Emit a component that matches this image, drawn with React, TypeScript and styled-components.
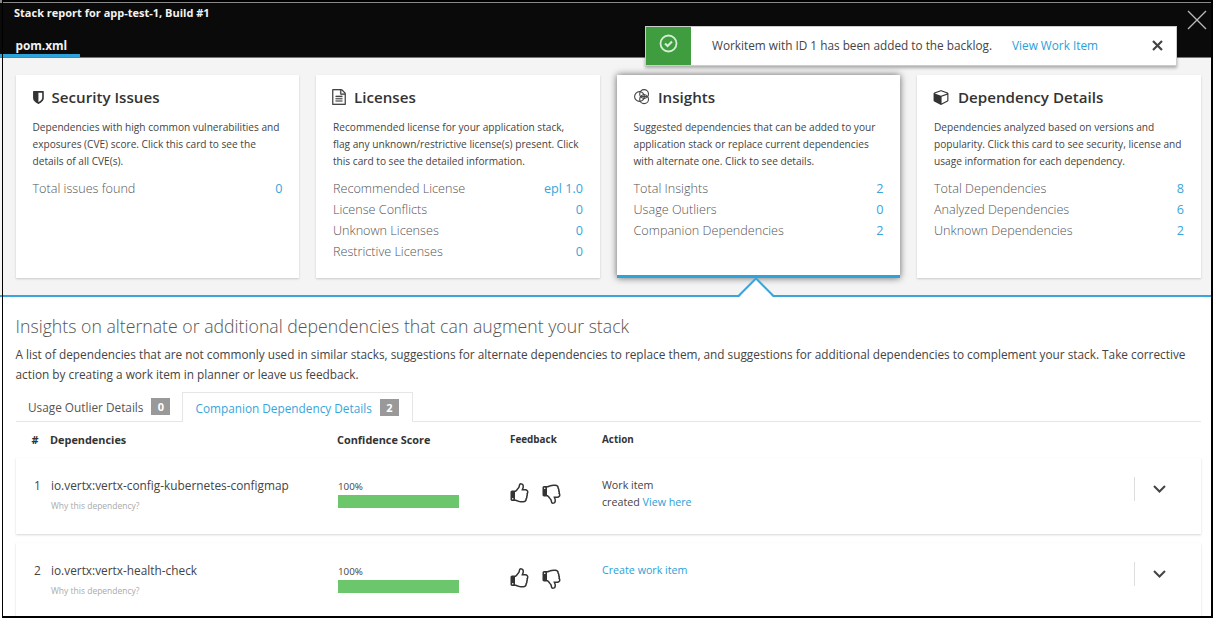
import React from "react";
import styled, { createGlobalStyle } from "styled-components";

const Global = createGlobalStyle`
  * { box-sizing: border-box; }
  body { margin: 0; background: #fff; font-family: "Open Sans", sans-serif; color: #444; }
  h1, h2, p { margin: 0; }
`;

const Frame = styled.div`
  position: relative;
  width: 1213px;
  height: 618px;
  overflow: hidden;
  background: #fff;
  &::after {
    content: "";
    position: absolute;
    inset: 0 0 0 2px;
    border: solid #000;
    border-width: 2px 2px 2px 1px;
    pointer-events: none;
  }
`;

const Header = styled.header`
  height: 58px;
  display: flex;
  justify-content: space-between;
  background: #0a0a0a;
  border-bottom: 1px solid #777;
  box-shadow: inset 0 3px 0 #8a8a8a;
  color: #f2f2f2;
  font-weight: 700;
`;

const HeaderLeft = styled.div`
  display: flex;
  flex-direction: column;
`;

const Title = styled.h1`
  height: 36px;
  padding: 5px 0 0 14px;
  font-size: 11px;
  line-height: 16px;
`;

const FileTab = styled.div`
  width: 80px;
  height: 22px;
  padding: 1px 0 0 15.5px;
  border-bottom: 3px solid #2da3dc;
  font-size: 11.8px;
  line-height: 18px;
`;

const CloseIcon = styled.svg`
  width: 20px;
  height: 20px;
  margin: 10px 6px 0 0;
  flex: none;
`;

const Toast = styled.div`
  position: absolute;
  left: 645px;
  top: 26px;
  width: 532px;
  height: 40px;
  display: flex;
  align-items: center;
  background: #fff;
  border: 1px solid #ccc;
  box-shadow: 0 2px 3px rgba(0, 0, 0, 0.3);
  font-size: 11.8px;
  z-index: 2;
  span, a { padding-bottom: 2px; }
`;

const ToastBadge = styled.div`
  width: 45px;
  height: 38px;
  display: flex;
  justify-content: center;
  padding-top: 7px;
  margin-right: 21px;
  background: #3f9c3f;
`;

const ToastLink = styled.a`
  margin-left: 20px;
  color: #2b9fd8;
`;

const ToastClose = styled.svg`
  width: 11px;
  height: 11px;
  margin: -2px 13px 0 auto;
`;

const Summary = styled.section`
  height: 239px;
  padding: 17px 12px 0 15.5px;
  display: grid;
  grid-template-columns: repeat(4, 283.5px);
  column-gap: 17px;
  background: #f4f4f4;
  border-bottom: 2px solid #39a5dc;
`;

const Card = styled.article<{ $active?: boolean }>`
  position: relative;
  height: 203px;
  padding: 11px 17px 0;
  background: #fff;
  border-bottom: ${(p) => (p.$active ? "3px solid #2da3dc" : "0")};
  box-shadow: ${(p) => (p.$active ? "0 0 7px rgba(0,0,0,.6)" : "0 1px 2px rgba(0,0,0,.18)")};
`;

const CardTitle = styled.h2<{ $gap: number }>`
  display: flex;
  align-items: center;
  gap: ${(p) => p.$gap}px;
  height: 22px;
  font-size: 15.15px;
  font-weight: 600;
  color: #333;
  svg { flex: none; margin-left: -1px; }
`;

const CardText = styled.p`
  margin-top: 11px;
  font-size: 10.15px;
  line-height: 17px;
  white-space: pre;
`;

const Stats = styled.div`
  margin: 8px -0.5px 0 0;
`;

const Stat = styled.div`
  display: flex;
  justify-content: space-between;
  font-size: 12.63px;
  font-weight: 300;
  line-height: 21px;
  color: #555;
`;

const StatValue = styled.span`
  color: #39a5dc;
  font-weight: 400;
`;

const Pointer = styled.svg`
  position: absolute;
  left: 121px;
  top: 202px;
  width: 36px;
  height: 21px;
`;

const Details = styled.main`
  padding: 17px 12px 0 15.5px;
`;

const DetailsTitle = styled.h2`
  font-size: 17.7px;
  line-height: 24px;
  font-weight: 300;
  color: #555;
`;

const Intro = styled.p`
  margin-top: 7px;
  font-size: 11.81px;
  line-height: 19.5px;
  white-space: pre;
`;

const Tabs = styled.div`
  height: 30px;
  margin-top: 8px;
  display: flex;
  border-bottom: 1px solid #e6e6e6;
`;

const Tab = styled.div<{ $active?: boolean }>`
  height: 30px;
  display: flex;
  align-items: center;
  gap: 8px;
  padding: ${(p) => (p.$active ? "0 13.5px 0 12.5px" : "0 11.5px 1px 12.5px")};
  border: ${(p) => (p.$active ? "1px solid #e6e6e6" : "0")};
  border-bottom: 0;
  background: ${(p) => (p.$active ? "#fff" : "transparent")};
  color: ${(p) => (p.$active ? "#39a5dc" : "#555")};
  font-size: 11.8px;
`;

const Count = styled.span`
  width: 19px;
  height: 17px;
  background: #999;
  color: #fff;
  font-size: 11px;
  font-weight: 700;
  line-height: 17px;
  text-align: center;
`;

const columns = "35.5px 287px 172px 92px 1fr";

const TableHead = styled.div`
  height: 36px;
  padding-bottom: 2px;
  display: grid;
  grid-template-columns: ${columns};
  align-items: center;
  font-size: 10.9px;
  font-weight: 700;
  color: #333;
  small { font-size: 9.9px; }
`;

const Row = styled.div`
  height: 76px;
  margin-bottom: 9px;
  display: grid;
  grid-template-columns: ${columns};
  background: #fff;
  box-shadow: 0 1px 2px rgba(0, 0, 0, 0.16);
`;

const HeadCell = styled.span<{ $indent?: number }>`
  padding-left: ${(p) => p.$indent ?? 0}px;
  margin-left: -1px;
`;

const Index = styled.span`
  padding: 18px 0 0 18.5px;
  font-size: 11.9px;
  line-height: 18px;
`;

const Dependency = styled.div`
  padding-top: 18px;
  font-size: 11.85px;
  line-height: 18px;
`;

const Why = styled.div`
  margin-top: 5px;
  color: #aaa;
  font-size: 8.5px;
  line-height: 14px;
`;

const Score = styled.div`
  padding-top: 22px;
  font-size: 9.8px;
  line-height: 14px;
`;

const Bar = styled.div`
  width: 121px;
  height: 13px;
  margin-top: 1px;
  background: #6cc66c;
`;

const Feedback = styled.div`
  display: flex;
  gap: 11px;
  margin-left: -1.5px;
  padding-top: 25px;
`;

const Thumb = styled.svg<{ $down?: boolean }>`
  width: 21px;
  height: 21px;
  fill: #333;
  transform: ${(p) => (p.$down ? "scaleY(-1)" : "none")};
`;

const ActionCell = styled.div`
  display: flex;
  justify-content: space-between;
  padding-top: 18.5px;
  font-size: 10.7px;
  line-height: 17.5px;
`;

const Link = styled.a`
  color: #2b9fd8;
`;

const Expander = styled.div`
  width: 67px;
  height: 24px;
  display: flex;
  align-items: center;
  padding-left: 18px;
  border-left: 1px solid #ddd;
`;

const ShieldIcon = () => (
  <svg width="15" height="15" viewBox="128 0 1536 1792" preserveAspectRatio="xMinYMid meet" fill="#333">
    <path d="M1344 960v-640h-448v1137q119-63 213-137 235-184 235-360zm192-768v768q0 86-33.5 170.5t-83 150-118 127.5-126.5 103-121 77.5-89.5 49.5-42.5 20q-12 6-26 6t-26-6q-16-7-42.5-20t-89.5-49.5-121-77.5-126.5-103-118-127.5-83-150-33.5-170.5v-768q0-26 19-45t45-19h1152q26 0 45 19t19 45z" />
  </svg>
);

const FileIcon = () => (
  <svg width="14" height="16" viewBox="128 0 1536 1792" fill="#444" stroke="#444" strokeWidth="20">
    <path d="M1596 380q28 28 48 76t20 88v1152q0 40-28 68t-68 28h-1344q-40 0-68-28t-28-68v-1600q0-40 28-68t68-28h896q40 0 88 20t76 48zm-444-244v376h376q-10-29-22-41l-313-313q-12-12-41-22zm384 1528v-1024h-416q-40 0-68-28t-28-68v-416h-768v1536h1280zm-1024-864q0-14 9-23t23-9h704q14 0 23 9t9 23v64q0 14-9 23t-23 9h-704q-14 0-23-9t-9-23v-64zm736 224q14 0 23 9t9 23v64q0 14-9 23t-23 9h-704q-14 0-23-9t-9-23v-64q0-14 9-23t23-9h704zm0 256q14 0 23 9t9 23v64q0 14-9 23t-23 9h-704q-14 0-23-9t-9-23v-64q0-14 9-23t23-9h704z" />
  </svg>
);

const InsightsIcon = () => (
  <svg width="17" height="16" viewBox="-0.5 0 17 16" fill="none" stroke="#444" strokeWidth="1.1">
    <circle cx="6" cy="7.5" r="4.9" />
    <circle cx="10.6" cy="5" r="4.4" />
    <circle cx="10.6" cy="10.2" r="4.4" />
    <path d="M6.5 7.6h7.5" />
  </svg>
);

const CubeIcon = () => (
  <svg width="16" height="16" viewBox="0 0 1664 1792" fill="#333">
    <path d="M896 1629l640-349v-636l-640 233v752zm-64-865l698-254-698-254-698 254zm832-252v768q0 35-18 65t-49 47l-704 384q-28 16-61 16t-61-16l-704-384q-31-17-49-47t-18-65v-768q0-40 23-73t61-47l704-256q22-8 44-8t44 8l704 256q38 14 61 47t23 73z" />
  </svg>
);

const thumbPath =
  "M384 1344q0-26-19-45t-45-19-45 19-19 45 19 45 45 19 45-19 19-45zm1152-576q0-51-39-89.5t-89-38.5h-352q0-58 48-159.5t48-160.5q0-98-32-145t-128-47q-26 26-38 85t-30.5 125.5-59.5 109.5q-22 23-77 91-4 5-23 30t-31.5 41-34.5 42.5-40 44-38.5 35.5-40 27-35.5 9h-32v640h32q13 0 31.5 3t33 6.5 38 11 35 11.5 35.5 12.5 29 10.5q211 73 342 73h121q192 0 192-167 0-26-5-56 30-16 47.5-52.5t17.5-73.5-18-69q53-50 53-119 0-25-10-55.5t-25-47.5q32-1 53.5-47t21.5-81zm128-1q0 89-49 163 9 33 9 69 0 77-38 144 3 21 3 43 0 101-60 178 1 139-85 219.5t-227 80.5h-129q-96 0-189.5-22.5t-216.5-65.5q-116-40-138-40h-288q-53 0-90.5-37.5t-37.5-90.5v-640q0-53 37.5-90.5t90.5-37.5h274q36-24 137-155 58-75 107-128 24-25 35.5-85.5t30.5-126.5 62-108q39-37 90-37 84 0 151 32.5t102 101.5 35 186q0 93-48 192h176q104 0 180 76t76 179z";

type CardData = {
  title: string;
  icon: React.ReactNode;
  gap: number;
  text: string;
  stats: [string, string][];
  active?: boolean;
};

const cards: CardData[] = [
  {
    title: "Security Issues",
    icon: <ShieldIcon />,
    gap: 5,
    text: "Dependencies with high common vulnerabilities and\nexposures (CVE) score. Click this card to see the\ndetails of all CVE(s).",
    stats: [["Total issues found", "0"]],
  },
  {
    title: "Licenses",
    icon: <FileIcon />,
    gap: 8,
    text: "Recommended license for your application stack,\nflag any unknown/restrictive license(s) present. Click\nthis card to see the detailed information.",
    stats: [
      ["Recommended License", "epl 1.0"],
      ["License Conflicts", "0"],
      ["Unknown Licenses", "0"],
      ["Restrictive Licenses", "0"],
    ],
  },
  {
    title: "Insights",
    icon: <InsightsIcon />,
    gap: 8.5,
    text: "Suggested dependencies that can be added to your\napplication stack or replace current dependencies\nwith alternate one. Click to see details.",
    stats: [
      ["Total Insights", "2"],
      ["Usage Outliers", "0"],
      ["Companion Dependencies", "2"],
    ],
    active: true,
  },
  {
    title: "Dependency Details",
    icon: <CubeIcon />,
    gap: 9,
    text: "Dependencies analyzed based on versions and\npopularity. Click this card to see security, license and\nusage information for each dependency.",
    stats: [
      ["Total Dependencies", "8"],
      ["Analyzed Dependencies", "6"],
      ["Unknown Dependencies", "2"],
    ],
  },
];

const rows = [
  {
    name: "io.vertx:vertx-config-kubernetes-configmap",
    action: (
      <span>
        Work item
        <br />
        created <Link>View here</Link>
      </span>
    ),
  },
  { name: "io.vertx:vertx-health-check", action: <Link>Create work item</Link> },
];

export default function App() {
  return (
    <Frame>
      <Global />
      <Header>
        <HeaderLeft>
          <Title>Stack report for app-test-1, Build #1</Title>
          <FileTab>pom.xml</FileTab>
        </HeaderLeft>
        <CloseIcon viewBox="0 0 20 20" stroke="#bbb" strokeWidth="1.3">
          <path d="M1 1l18 18M19 1L1 19" />
        </CloseIcon>
      </Header>
      <Toast>
        <ToastBadge>
          <svg width="19" height="19" viewBox="0 0 19 19" fill="none" stroke="#d5ecd5" strokeWidth="1.8">
            <circle cx="9.5" cy="9.5" r="8" />
            <path d="M6 9.4l2.6 2.5 4.4-4.5" strokeWidth="2.1" />
          </svg>
        </ToastBadge>
        <span>Workitem with ID 1 has been added to the backlog.</span>
        <ToastLink>View Work Item</ToastLink>
        <ToastClose viewBox="0 0 11 11" stroke="#444" strokeWidth="2.2">
          <path d="M1 1l9 9M10 1l-9 9" />
        </ToastClose>
      </Toast>
      <Summary>
        {cards.map((c) => (
          <Card key={c.title} $active={c.active}>
            <CardTitle $gap={c.gap}>
              {c.icon}
              <span>{c.title}</span>
            </CardTitle>
            <CardText>{c.text}</CardText>
            <Stats>
              {c.stats.map(([label, value]) => (
                <Stat key={label}>
                  <span>{label}</span>
                  <StatValue>{value}</StatValue>
                </Stat>
              ))}
            </Stats>
            {c.active && (
              <Pointer viewBox="0 0 36 21">
                <path d="M0 21L18 2l18 19z" fill="#fff" />
                <path d="M0 19.5L18 1.5l18 18" fill="none" stroke="#39a5dc" strokeWidth="2" />
              </Pointer>
            )}
          </Card>
        ))}
      </Summary>
      <Details>
        <DetailsTitle>Insights on alternate or additional dependencies that can augment your stack</DetailsTitle>
        <Intro>
          {"A list of dependencies that are not commonly used in similar stacks, suggestions for alternate dependencies to replace them, and suggestions for additional dependencies to complement your stack. Take corrective\naction by creating a work item in planner or leave us feedback."}
        </Intro>
        <Tabs>
          <Tab>
            Usage Outlier Details <Count>0</Count>
          </Tab>
          <Tab $active>
            Companion Dependency Details <Count>2</Count>
          </Tab>
        </Tabs>
        <TableHead>
          <HeadCell $indent={17}>#</HeadCell>
          <HeadCell>Dependencies</HeadCell>
          <HeadCell>Confidence Score</HeadCell>
          <small>Feedback</small>
          <small>Action</small>
        </TableHead>
        {rows.map((r, i) => (
          <Row key={r.name}>
            <Index>{i + 1}</Index>
            <Dependency>
              {r.name}
              <Why>Why this dependency?</Why>
            </Dependency>
            <Score>
              100%
              <Bar />
            </Score>
            <Feedback>
              <Thumb viewBox="0 0 1792 1792">
                <path d={thumbPath} />
              </Thumb>
              <Thumb $down viewBox="0 0 1792 1792">
                <path d={thumbPath} />
              </Thumb>
            </Feedback>
            <ActionCell>
              {r.action}
              <Expander>
                <svg width="13" height="8" viewBox="0 0 13 8" fill="none" stroke="#444" strokeWidth="2">
                  <path d="M1 1l5.5 5.5L12 1" />
                </svg>
              </Expander>
            </ActionCell>
          </Row>
        ))}
      </Details>
    </Frame>
  );
}
